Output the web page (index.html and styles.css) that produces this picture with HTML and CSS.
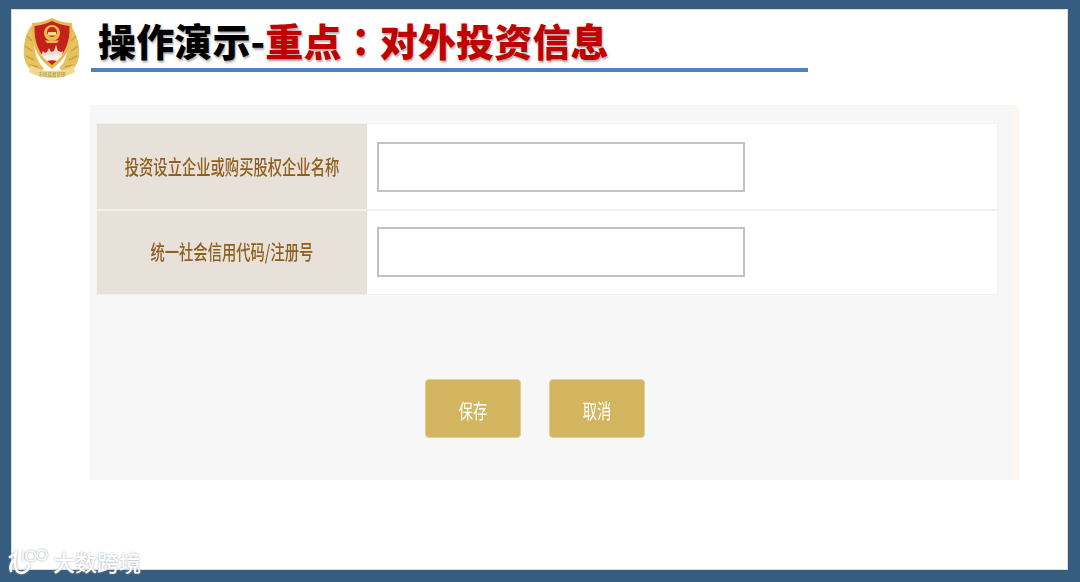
FILE: index.html
```html
<!DOCTYPE html>
<html>
<head>
    <title>操作演示-重点：对外投资信息</title>
    <link rel="stylesheet" href="styles.css">
</head>
<body>
    <div class="slide">
        <div class="header">
            <svg class="emblem" width="60" height="64" viewBox="0 0 60 64">
                <!-- wheat -->
                <path d="M9 8 C3 16 1 28 2 38 C3 47 8 53 16 56 L22 50 C14 44 10 26 12 8 Z" fill="#e6c25e"/>
                <path d="M49 8 C55 16 58 28 57 38 C56 47 51 53 43 56 L37 50 C45 44 48 26 47 8 Z" fill="#e6c25e"/>
                <path d="M5 18 L10 23 M3 28 L10 33 M4 38 L12 42 M8 47 L16 49 M54 18 L49 23 M56 28 L49 33 M55 38 L47 42 M51 47 L43 49" stroke="#c9a03f" stroke-width="1.500" fill="none"/>
                <!-- shield -->
                <path d="M30 0 C36 3 44 5 50 5 C51 22 48 38 30 51 C12 38 9 22 10 5 C16 5 24 3 30 0 Z" fill="#e4b94e"/>
                <path d="M30 3 C36 6 43 7.500 47.500 8 C48 23 44 36 30 47 C16 36 12 23 12.500 8 C17 7.500 24 6 30 3 Z" fill="#c4201e"/>
                <!-- national emblem -->
                <circle cx="30" cy="15" r="8" fill="#e9bf4e"/>
                <circle cx="30" cy="14" r="5" fill="#c9261f"/>
                <rect x="26" y="14" width="8" height="3.500" fill="#f3dc90"/>
                <path d="M23 22.500 H37 L35 25 H25 Z" fill="#e9bf4e"/>
                <!-- city -->
                <path d="M19 38 L21 33 L23 35 L25 34 L27 30 L29 34 L32 33 L34 27 L36 33 L39 34 L41 33 L40 38 Z" fill="#f7dccb"/>
                <path d="M20 38 C26 37 35 37 40 38 L35 43 C32 42 28 42 25 43 Z" fill="#fff2e6"/>
                <!-- ribbon -->
                <path d="M9 47 C15 52 24 53 30 53 C36 53 45 52 51 47 L53 54 C46 58 38 60 30 60 C22 60 14 58 7 54 Z" fill="#eed98f"/>
                <text class="emblem-text" x="30" y="58" text-anchor="middle">市场监督管理</text>
            </svg>
            <div class="title-wrap">
                <h1 class="title">操作演示-<span class="title-red">重点<span class="title-colon">：</span>对外投资信息</span></h1>
            </div>
        </div>

        <div class="panel">
            <div class="form-table">
                <div class="cell-label"><span class="squeeze">投资设立企业或购买股权企业名称</span></div>
                <div class="cell-input"><input class="text-input" type="text"></div>
                <div class="cell-label row-two"><span class="squeeze">统一社会信用代码/注册号</span></div>
                <div class="cell-input row-two"><input class="text-input" type="text"></div>
            </div>
            <div class="buttons">
                <button class="btn"><span class="squeeze">保存</span></button>
                <button class="btn"><span class="squeeze">取消</span></button>
            </div>
        </div>
    </div>

    <div class="watermark">
        <svg width="42" height="30" viewBox="0 0 42 30">
            <path d="M2 11 L7 8 M8 6 C7 14 6 20 9 25 C13 29 20 26 21 20 M6 14 C2 18 2 22 3 25" stroke="#fff" stroke-width="2.500" fill="none" stroke-linecap="round"/>
            <circle cx="23" cy="10" r="5" stroke="#fff" stroke-width="1.500" fill="none"/>
            <circle cx="34" cy="9" r="5" stroke="#fff" stroke-width="1.500" fill="none"/>
            <path d="M15 5 L15 15" stroke="#fff" stroke-width="1.500"/>
        </svg>
        <span>大数跨境</span>
    </div>
</body>
</html>
```

FILE: styles.css
```css
body {
    margin: 0;
    font-family: "Liberation Sans", "Noto Sans CJK SC", sans-serif;
    background-color: #ffffff;
}
.slide {
    box-sizing: border-box;
    width: 1080px;
    height: 582px;
    border-style: solid;
    border-color: #365c7f;
    border-width: 9px 12px 12px 11px;
    background-color: #ffffff;
    box-shadow: inset 0 0 0 1px #d5e0ea;
}
.header {
    display: flex;
    align-items: flex-start;
    height: 96px;
    padding-left: 11px;
    box-sizing: border-box;
}
.emblem {
    margin-top: 9px;
    flex: none;
    filter: blur(0.5px);
}
.emblem-text {
    font-size: 4.500px;
    fill: #a8883a;
    font-family: "Noto Sans CJK SC", sans-serif;
}
.title-wrap {
    margin-left: 9px;
    width: 717px;
    height: 63px;
    box-sizing: border-box;
    border-bottom: 4px solid #4f81bd;
}
.title {
    margin: 6px 0 0 7px;
    font-family: "Noto Sans CJK SC", sans-serif;
    font-size: 38px;
    line-height: 50px;
    font-weight: 900;
    letter-spacing: 0.150px;
    color: #000000;
    text-shadow: 1px 2px 2px #b0b0b0;
    white-space: nowrap;
}
.title-red {
    color: #c00000;
}
.title-colon {
    font-family: "Noto Sans CJK TC", sans-serif;
}
.panel {
    box-sizing: border-box;
    width: 929px;
    height: 375px;
    margin-left: 79px;
    padding: 19px 0 0 7px;
    background-color: #f7f7f7;
    border-right: 5px solid #fdf8ee;
}
.form-table {
    display: grid;
    grid-template-columns: 270px 630px;
    grid-template-rows: 85px 85px;
    width: 900px;
    background-color: #f0f0f0;
    box-shadow: 0 0 0 1px #f2f2f2;
}
.cell-label {
    display: flex;
    align-items: center;
    justify-content: center;
    background-color: #e8e1da;
    color: #8f5f1f;
    font-family: "Noto Sans CJK SC", sans-serif;
    font-size: 20px;
    font-weight: 500;
    white-space: nowrap;
}
.squeeze {
    display: inline-block;
    transform: scaleX(0.715);
}
.cell-input {
    display: flex;
    align-items: center;
    padding-left: 10px;
    background-color: #ffffff;
}
.row-two {
    box-shadow: inset 0 2px 0 #f1efed;
}
.text-input {
    box-sizing: border-box;
    width: 368px;
    height: 50px;
    border: 2px solid #c2c2c2;
    background-color: #ffffff;
    padding: 0;
}
.buttons {
    display: flex;
    gap: 28px;
    margin: 85px 0 0 328px;
}
.btn {
    width: 96px;
    height: 59px;
    border: 1px solid #dfcf9f;
    border-radius: 4px;
    background-color: #d3b560;
    color: #ffffff;
    font-family: "Noto Sans CJK SC", sans-serif;
    font-size: 20px;
    font-weight: 400;
    padding: 4px 0 0;
}
.watermark {
    position: absolute;
    left: 8px;
    top: 546px;
    display: flex;
    align-items: center;
    gap: 3px;
    color: #ffffff;
    font-family: "Noto Sans CJK SC", sans-serif;
    font-size: 22px;
    font-weight: 500;
    line-height: 30px;
    text-shadow: 0 0 2px #8f9dab;
    white-space: nowrap;
}
.watermark svg {
    filter: drop-shadow(0 0 1px #8f9dab);
}
```
